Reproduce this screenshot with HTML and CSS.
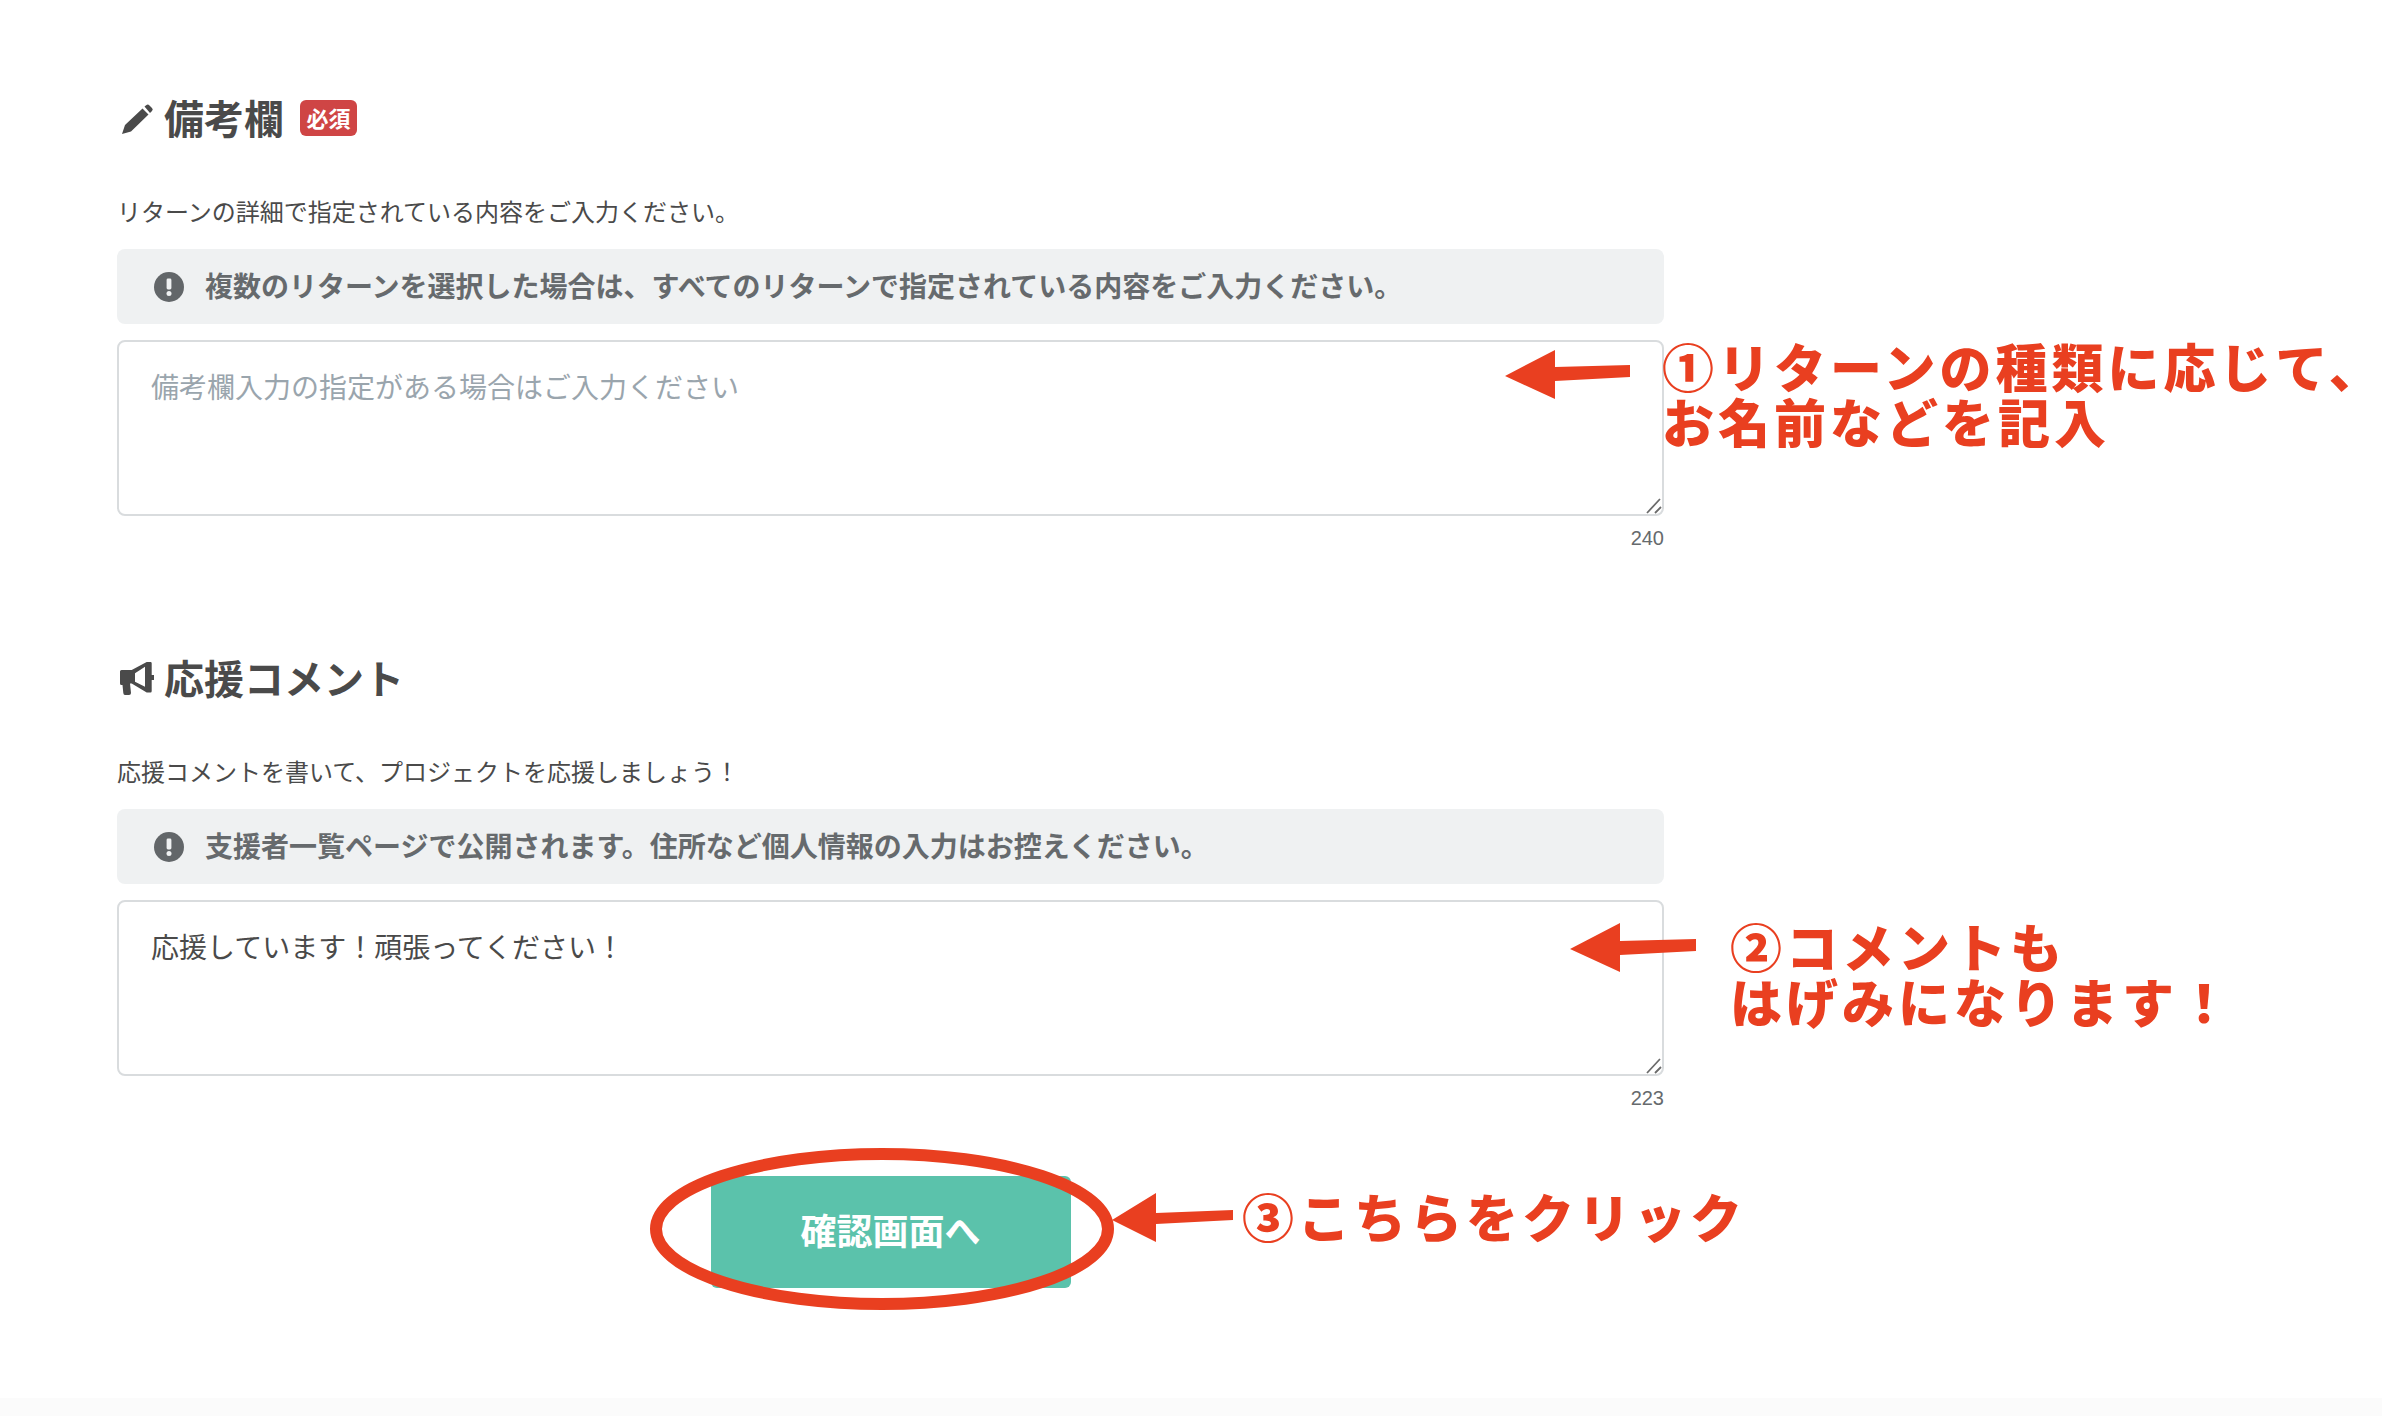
FILE: index.html
```html
<!DOCTYPE html>
<html lang="ja">
<head>
    <meta charset="UTF-8">
    <title>備考欄・応援コメント</title>
    <link rel="stylesheet" href="styles.css">
</head>
<body>

    <div class="container">
        <div class="section">
            <h2 class="heading">
                <svg class="heading-icon" viewBox="0 0 34 33"><path d="M24.500 4.500 26.500 3Q28 2 29.500 3.500L32 6Q33.500 7.500 32 9L30 11zM22.500 6.500 28.500 12.500 11 29.500 2 32 5 23z"/></svg>
                <span class="heading-text">備考欄</span>
                <span class="badge">必須</span>
            </h2>
            <p class="desc">リターンの詳細で指定されている内容をご入力ください。</p>
            <div class="note">
                <svg class="note-icon" viewBox="0 0 30 30"><circle cx="15" cy="15" r="15"/><rect class="mark" x="12.600" y="6.500" width="4.800" height="11" rx="1.400"/><circle class="mark" cx="15" cy="21.500" r="2.500"/></svg>
                <span class="note-text">複数のリターンを選択した場合は、すべてのリターンで指定されている内容をご入力ください。</span>
            </div>
            <div class="field-wrap">
                <textarea class="field" placeholder="備考欄入力の指定がある場合はご入力ください"></textarea>
                <svg class="grip" viewBox="0 0 16 16"><path d="M1 15 14 1M9 15 15 9"/></svg>
            </div>
            <div class="count">240</div>
        </div>

        <div class="section">
            <h2 class="heading">
                <svg class="heading-icon" viewBox="0 0 34 33"><path fill-rule="evenodd" d="M1.500 8H11.700L26.700 0H30.500Q31.700 0 31.700 1.300V13H34V18H31.700V29Q31.700 30.500 30.500 30.500H26.700L11.700 21.500H10L11 31Q11 33 9 33H5Q3.500 33 3.300 31L2.500 23H1.500Q0 23 0 21.500V9.500Q0 8 1.500 8zM15 11.300V19.700L25 24.700V4.700z"/></svg>
                <span class="heading-text">応援コメント</span>
            </h2>
            <p class="desc">応援コメントを書いて、プロジェクトを応援しましょう！</p>
            <div class="note">
                <svg class="note-icon" viewBox="0 0 30 30"><circle cx="15" cy="15" r="15"/><rect class="mark" x="12.600" y="6.500" width="4.800" height="11" rx="1.400"/><circle class="mark" cx="15" cy="21.500" r="2.500"/></svg>
                <span class="note-text">支援者一覧ページで公開されます。住所など個人情報の入力はお控えください。</span>
            </div>
            <div class="field-wrap">
                <textarea class="field">応援しています！頑張ってください！</textarea>
                <svg class="grip" viewBox="0 0 16 16"><path d="M1 15 14 1M9 15 15 9"/></svg>
            </div>
            <div class="count">223</div>
        </div>

        <div class="actions">
            <button class="submit-btn"><span class="submit-text">確認画面へ</span></button>
        </div>
    </div>

    <div class="footer"></div>

    <!-- 赤い書き込み -->
    <svg class="marks" viewBox="0 0 2382 1416">
        <path d="M1505 376 1555 350 1555 367 1630 365 1630 377 1555 381 1555 399z"/>
        <path d="M1570 949 1620 923 1620 941 1696 939 1696 951 1620 955 1620 972z"/>
        <path d="M1112 1220 1156 1193 1156 1213 1233 1210 1233 1220 1156 1224 1156 1242z"/>
        <ellipse class="ring" cx="882" cy="1229" rx="226" ry="75"/>
    </svg>
    <div class="memo memo-1">①リターンの種類に応じて、<br>お名前などを記入</div>
    <div class="memo memo-2">②コメントも<br>はげみになります！</div>
    <div class="memo memo-3">③こちらをクリック</div>

</body>
</html>
```

FILE: styles.css
```css
body {
    margin: 0;
    background-color: #ffffff;
    color: #4a4a4a;
    font-family: "Noto Sans CJK JP", "Liberation Sans", sans-serif;
    height: 1416px;
    display: flex;
    flex-direction: column;
    position: relative;
    overflow: hidden;
}

.container {
    width: 1547px;
    margin-left: 117px;
    padding-top: 90px;
    flex: 1;
}

.section {
    height: 560px;
}

.heading {
    display: flex;
    align-items: center;
    margin: 0;
    height: 56px;
    font-size: 40px;
    font-weight: 700;
    line-height: 56px;
    color: #4a4a4a;
}

.heading-text {
    padding-bottom: 3px;
}

.heading-icon {
    width: 34px;
    height: 33px;
    margin-left: 3px;
    margin-right: 10px;
    fill: #4a4a4a;
}

.badge {
    width: 57px;
    height: 36px;
    margin-left: 16px;
    background-color: #cf4545;
    border-radius: 6px;
    color: #ffffff;
    font-size: 22px;
    line-height: 34px;
    text-align: center;
}

.desc {
    margin: 47px 0 20px;
    font-size: 24px;
    line-height: 36px;
    color: #4a4a4a;
}

.note {
    display: flex;
    align-items: center;
    height: 75px;
    padding-left: 37px;
    background-color: #eff1f2;
    border-radius: 8px;
    font-size: 28px;
    font-weight: 700;
    color: #666a6d;
}

.note-text {
    padding-bottom: 3px;
}

.note-icon {
    width: 30px;
    height: 30px;
    margin-right: 21px;
    fill: #626669;
}

.note-icon .mark {
    fill: #eff1f2;
}

.field-wrap {
    position: relative;
    margin-top: 16px;
}

.field {
    display: block;
    box-sizing: border-box;
    width: 100%;
    height: 176px;
    padding: 24px 32px;
    border: 2px solid #d9dcde;
    border-radius: 8px;
    background-color: #ffffff;
    color: #4a4a4a;
    font-family: inherit;
    font-size: 28px;
    line-height: 40px;
    outline: none;
    resize: none;
}

.field::placeholder {
    color: #9aa5ad;
    opacity: 1;
}

.grip {
    position: absolute;
    right: 2px;
    bottom: 2px;
    width: 16px;
    height: 16px;
    fill: none;
    stroke: #6b6b6b;
    stroke-width: 1.800;
}

.count {
    margin-top: 10px;
    font-family: "Liberation Sans", sans-serif;
    font-size: 20px;
    line-height: 24px;
    text-align: right;
    color: #666a6d;
}

.actions {
    display: flex;
    justify-content: center;
    margin-top: -34px;
}

.submit-btn {
    width: 360px;
    height: 112px;
    padding: 0;
    border: none;
    border-radius: 6px;
    background-color: #5bc2ab;
    color: #ffffff;
    font-family: inherit;
    font-size: 36px;
    font-weight: 700;
}

.submit-text {
    display: block;
    padding-bottom: 6px;
}

.footer {
    height: 18px;
    background-color: #fbfbfb;
}

.marks {
    position: absolute;
    top: 0;
    left: 0;
    width: 2382px;
    height: 1416px;
    fill: #e93f20;
    pointer-events: none;
}

.marks .ring {
    fill: none;
    stroke: #e93f20;
    stroke-width: 12;
}

.memo {
    position: absolute;
    color: #e93f20;
    font-size: 52px;
    font-weight: 900;
    line-height: 55px;
    letter-spacing: 4px;
    white-space: nowrap;
}

.memo-1 {
    left: 1662px;
    top: 338px;
}

.memo-2 {
    left: 1730px;
    top: 918px;
}

.memo-3 {
    left: 1242px;
    top: 1188px;
}
```
